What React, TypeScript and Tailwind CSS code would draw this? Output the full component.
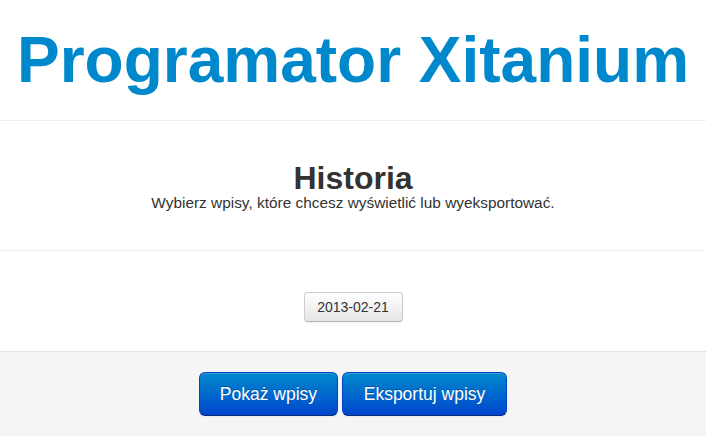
export default function App() {
  return (
    <div className="w-[706px] h-[436px] bg-white flex flex-col overflow-hidden" style={{ fontFamily: '"Liberation Sans", Arial, sans-serif' }}>
      <div className="h-[121px] border-b border-[#eeeeee] flex items-start justify-center pt-[28px]">
        <h1 className="text-[64px] leading-[64px] font-bold text-[#0088cc] m-0">Programator Xitanium</h1>
      </div>
      <div className="h-[130px] border-b border-[#eeeeee] flex flex-col items-center pt-[41px]">
        <h2 className="text-[32px] leading-[32px] font-bold text-[#333333] m-0">Historia</h2>
        <p className="text-[15.4px] leading-[18px] text-[#333333] m-0">Wybierz wpisy, które chcesz wyświetlić lub wyeksportować.</p>
      </div>
      <div className="h-[100px] flex justify-center pt-[41px]">
        <button className="w-[99px] h-[30px] rounded-[4px] border border-[#cccccc] border-b-[#b3b3b3] bg-gradient-to-b from-white to-[#e6e6e6] text-[14px] text-[#333333] shadow-[inset_0_1px_0_rgba(255,255,255,0.2),0_1px_2px_rgba(0,0,0,0.05)]">
          2013-02-21
        </button>
      </div>
      <div className="flex-1 bg-[#f5f5f5] border-t border-[#e5e5e5] flex justify-center items-start pt-[20px] gap-[4px]">
        <button className="w-[139px] h-[44px] rounded-[6px] border border-[#0044cc] border-b-[#002a80] bg-gradient-to-b from-[#0088cc] to-[#0044cc] text-white text-[17.5px] shadow-[inset_0_1px_0_rgba(255,255,255,0.2),0_1px_2px_rgba(0,0,0,0.05)] [text-shadow:0_-1px_0_rgba(0,0,0,0.25)]">
          Pokaż wpisy
        </button>
        <button className="w-[165px] h-[44px] rounded-[6px] border border-[#0044cc] border-b-[#002a80] bg-gradient-to-b from-[#0088cc] to-[#0044cc] text-white text-[17.5px] shadow-[inset_0_1px_0_rgba(255,255,255,0.2),0_1px_2px_rgba(0,0,0,0.05)] [text-shadow:0_-1px_0_rgba(0,0,0,0.25)]">
          Eksportuj wpisy
        </button>
      </div>
    </div>
  );
}
